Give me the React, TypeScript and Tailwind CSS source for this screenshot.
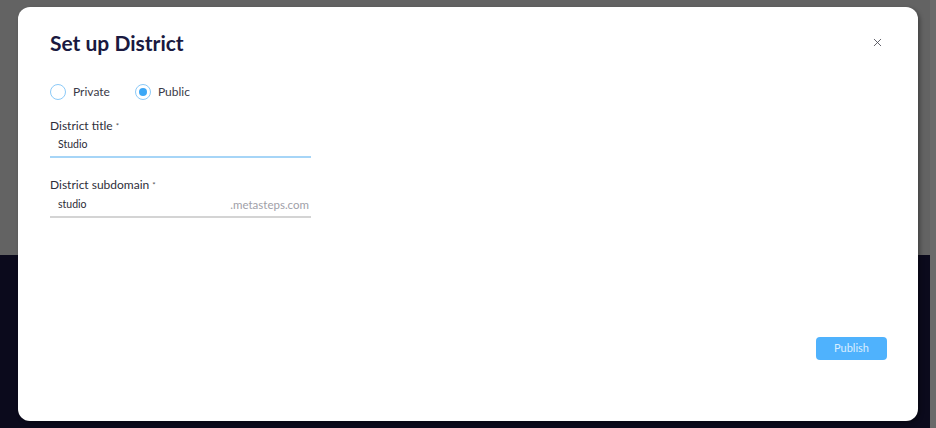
import { X } from "lucide-react";

function Radio({ label, checked }: { label: string; checked?: boolean }) {
  return (
    <label className="flex items-center gap-[7px]">
      <span className="flex h-[16px] w-[16px] items-center justify-center rounded-full border border-[#8ccaf8] bg-white">
        {checked && <span className="h-[8px] w-[8px] rounded-full bg-[#3ba7f6]" />}
      </span>
      <span className="text-[12px] text-[#3a3a48]">{label}</span>
    </label>
  );
}

export default function App() {
  return (
    <div
      className="relative h-[428px] w-[936px] overflow-hidden bg-[#636363]"
      style={{ fontFamily: "Lato, 'Noto Sans', sans-serif" }}
    >
      <div className="absolute left-0 top-[255px] h-[173px] w-[930px] bg-[#0b0a1c]" />
      <div className="absolute right-0 top-0 h-full w-[6px] bg-[#6a6a6a]" />

      <div className="absolute left-[18px] top-[7px] flex h-[414px] w-[900px] flex-col rounded-[12px] bg-white px-[32px] pt-[22px] shadow-[2px_2px_4px_rgba(0,0,0,0.35)]">
        <div className="flex items-start justify-between">
          <h1 className="text-[21px] font-bold leading-[28px] text-[#1a1940]">Set up District</h1>
          <button type="button" className="mr-[2px] mt-[7px] text-[#4a4a55]">
            <X size={13} strokeWidth={1.6} />
          </button>
        </div>

        <div className="mt-[26px] flex items-center gap-[25px]">
          <Radio label="Private" />
          <Radio label="Public" checked />
        </div>

        <div className="mt-[17px] w-[261px]">
          <div className="text-[12px] leading-[16px] text-[#2e2e3a]">
            District title <span className="align-top text-[8px] text-[#555]">*</span>
          </div>
          <div className="mt-[3px] border-b-2 border-b-[#a6d5f7] pb-[4px] pl-[8px] text-[10.5px] leading-[15px] text-[#2b2b35]">
            Studio
          </div>
        </div>

        <div className="mt-[19px] w-[261px]">
          <div className="text-[12px] leading-[16px] text-[#2e2e3a]">
            District subdomain <span className="align-top text-[8px] text-[#555]">*</span>
          </div>
          <div className="mt-[4px] flex items-center justify-between border-b-2 border-b-[#d4d4d4] pb-[4px] pl-[8px] pr-[2px] text-[11px] leading-[15px]">
            <span className="text-[10.5px] text-[#2b2b35]">studio</span>
            <span className="text-[11.5px] text-[#a0a0a8]">.metasteps.com</span>
          </div>
        </div>

        <div className="mt-[119px] flex justify-end">
          <button
            type="button"
            className="mr-[-1px] h-[23px] w-[71px] rounded-[4px] bg-[#4fb2fd] text-[11px] text-[#d9eeff]"
          >
            Publish
          </button>
        </div>
      </div>
    </div>
  );
}
